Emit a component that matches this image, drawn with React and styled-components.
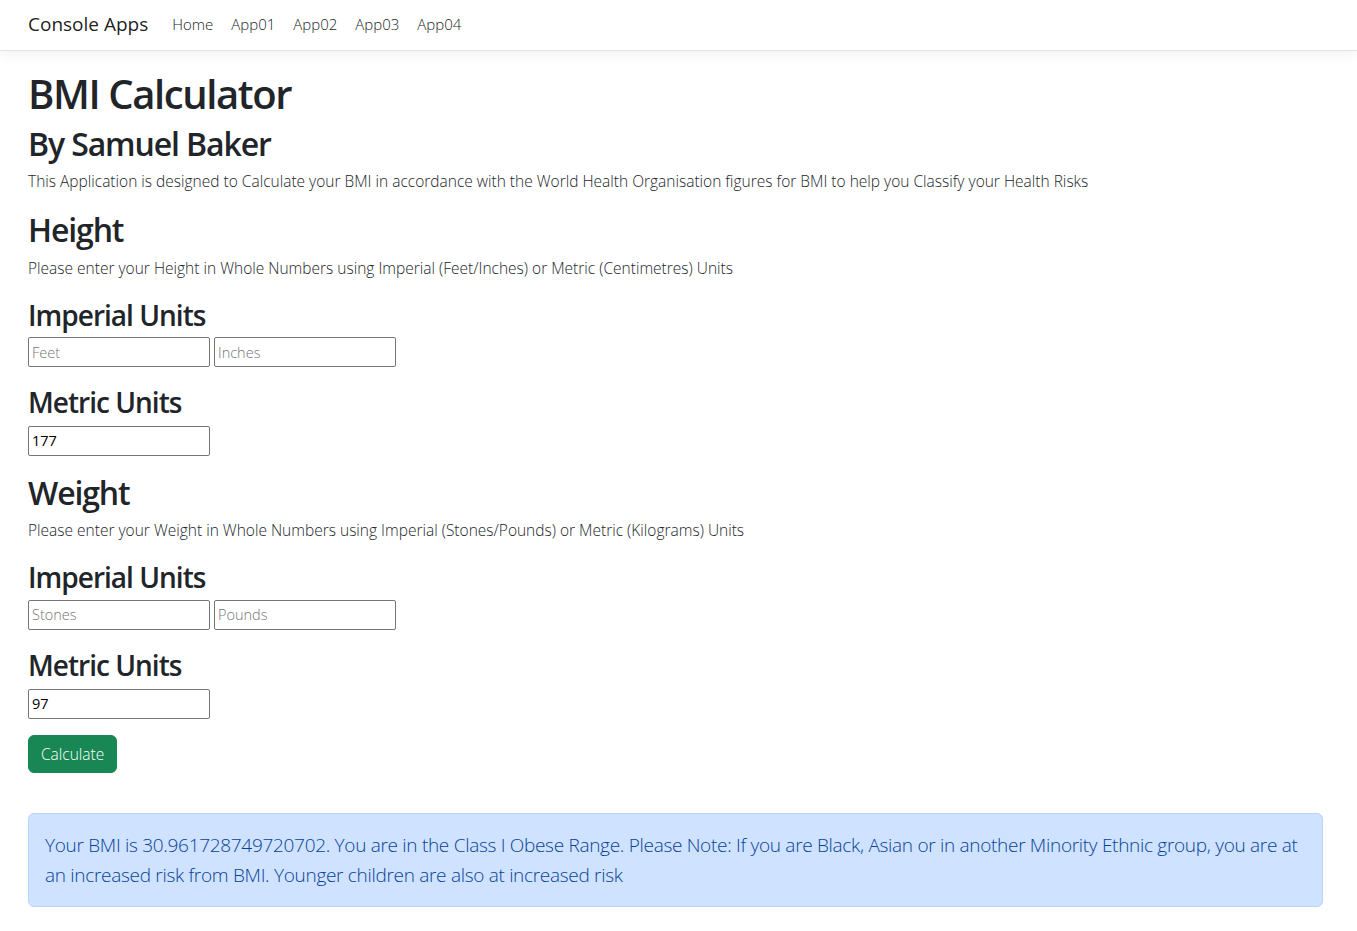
import React from "react";
import styled, { createGlobalStyle } from "styled-components";

const GlobalStyle = createGlobalStyle`
    html, body {
        margin: 0;
        padding: 0;
        background: #fff;
    }
    body {
        font-family: "Open Sans", "Noto Sans", sans-serif;
        font-size: 16px;
        line-height: 1.5;
        color: #212529;
        font-weight: 300;
    }
`;

const Navbar = styled.nav`
    height: 50px;
    display: flex;
    align-items: center;
    padding: 0 28px;
    background: #fff;
    border-bottom: 1px solid #e3e3e3;
    box-shadow: 0 4px 12px rgba(0, 0, 0, 0.05);
    margin-bottom: 16px;
`;

const Brand = styled.a`
    font-size: 19px;
    font-weight: 400;
    color: rgba(0, 0, 0, 0.9);
    text-decoration: none;
    margin-right: 15px;
    padding-bottom: 1px;
`;

const NavList = styled.ul`
    display: flex;
    list-style: none;
    margin: 0;
    padding: 0 0 2px;
`;

const NavLink = styled.a`
    display: block;
    padding: 0 9px;
    font-size: 15px;
    color: #212529;
    text-decoration: none;
`;

const Main = styled.main`
    padding: 0 34px 0 28px;
`;

// shift nudges the glyphs down without moving what follows
const Heading = styled.h1`
    margin: 0 0 ${(p) => 8 - (p.shift || 0)}px;
    padding-top: ${(p) => p.shift || 0}px;
    font-weight: 600;
    line-height: 1.2;
    letter-spacing: -0.035em;
    color: #212529;
    font-size: ${(p) => p.size}px;
`;

const Text = styled.p`
    margin: 0 0 16px;
    font-size: 15.5px;
    line-height: 24px;
`;

const InputRow = styled.div`
    display: flex;
    gap: 4px;
    margin-bottom: ${(p) => p.gap}px;
`;

const Field = styled.input`
    box-sizing: border-box;
    width: 182px;
    height: 30px;
    padding: 1px 3px;
    border: 1px solid #767676;
    border-radius: 2px;
    font-family: "Open Sans", "Noto Sans", sans-serif;
    font-size: 14.5px;
    color: #000;
    &::placeholder {
        color: #757575;
        font-weight: 300;
    }
`;

const Button = styled.button`
    box-sizing: border-box;
    height: 38px;
    padding: 6px 12px;
    border: 1px solid #198754;
    border-radius: 6px;
    background: #198754;
    color: #fff;
    font-family: inherit;
    font-weight: 300;
    font-size: 15.5px;
    line-height: 24px;
    cursor: pointer;
`;

const Alert = styled.div`
    margin-top: 40px;
    padding: 16px;
    border: 1px solid #b6d4fe;
    border-radius: 6px;
    background: #cfe2ff;
    color: #084298;
    font-size: 19px;
    letter-spacing: -0.3px;
    line-height: 30px;
`;

function UnitsBlock({ title, hint, first, second, metric }) {
    return (
        <>
            <Heading as="h2" size={32} shift={2}>{title}</Heading>
            <Text>{hint}</Text>
            <Heading as="h3" size={28} shift={3}>Imperial Units</Heading>
            <InputRow gap={17}>
                <Field placeholder={first} />
                <Field placeholder={second} />
            </InputRow>
            <Heading as="h3" size={28} shift={2}>Metric Units</Heading>
            <InputRow gap={16}>
                <Field defaultValue={metric} />
            </InputRow>
        </>
    );
}

export default function App() {
    return (
        <>
            <GlobalStyle />
            <Navbar>
                <Brand href="#">Console Apps</Brand>
                <NavList>
                    {["Home", "App01", "App02", "App03", "App04"].map((l) => (
                        <li key={l}><NavLink href="#">{l}</NavLink></li>
                    ))}
                </NavList>
            </Navbar>
            <Main>
                <Heading size={40} shift={3}>BMI Calculator</Heading>
                <Heading as="h2" size={32} shift={2}>By Samuel Baker</Heading>
                <Text>This Application is designed to Calculate your BMI in accordance with the World Health Organisation figures for BMI to help you Classify your Health Risks</Text>
                <UnitsBlock
                    title="Height"
                    hint="Please enter your Height in Whole Numbers using Imperial (Feet/Inches) or Metric (Centimetres) Units"
                    first="Feet"
                    second="Inches"
                    metric="177"
                />
                <UnitsBlock
                    title="Weight"
                    hint="Please enter your Weight in Whole Numbers using Imperial (Stones/Pounds) or Metric (Kilograms) Units"
                    first="Stones"
                    second="Pounds"
                    metric="97"
                />
                <Button>Calculate</Button>
                <Alert>Your BMI is 30.961728749720702. You are in the Class I Obese Range. Please Note: If you are Black, Asian or in another Minority Ethnic group, you are at an increased risk from BMI. Younger children are also at increased risk</Alert>
            </Main>
        </>
    );
}
